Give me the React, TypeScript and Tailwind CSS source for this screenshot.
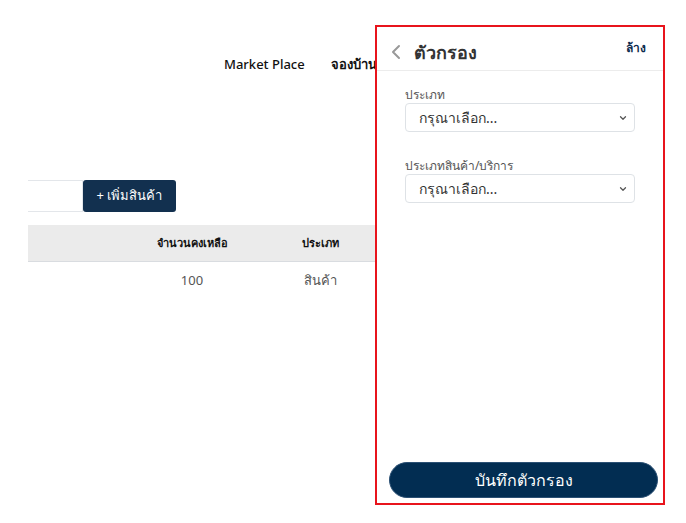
import React from "react";

function Chevron({ className }: { className?: string }) {
  return (
    <svg className={className} viewBox="0 0 16 16" fill="none" stroke="currentColor" strokeWidth="2" strokeLinecap="round" strokeLinejoin="round">
      <path d="M4 6l4 4 4-4" />
    </svg>
  );
}

function SelectBox() {
  return (
    <div className="flex h-[29px] w-full items-center justify-between rounded-[4px] border border-[#dee2e6] pl-[13px] pr-[6px] text-[14px] text-[#333]">
      <span>กรุณาเลือก...</span>
      <Chevron className="h-[10px] w-[10px] text-[#555]" />
    </div>
  );
}

export default function App() {
  return (
    <div className="relative h-[523px] w-[686px] overflow-hidden bg-white" style={{ fontFamily: '"Noto Sans", "Open Sans", sans-serif' }}>
      {/* page */}
      <div className="pl-[28px]">
        <div className="flex h-[20px] items-center mt-[55px] pl-[196px] text-[13px] text-[#111]">
          <span className="font-medium">Market Place</span>
          <span className="ml-[26px] font-bold">จองบ้าน</span>
        </div>
        <div className="mt-[105px] flex">
          <div className="h-[32px] w-[55px] border border-l-0 border-[#e3e6ea]" />
          <div className="flex h-[32px] w-[93px] items-center justify-center rounded-[3px] bg-[#12304f] text-[13px] text-white">
            + เพิ่มสินค้า
          </div>
        </div>
        <div className="mt-[13px] w-[360px]">
          <div className="grid h-[37px] grid-cols-[97px_134px_122px] items-center border-b border-[#d9dce0] bg-[#ebebeb] text-[11px] font-bold text-[#111]">
            <span />
            <span className="text-center">จำนวนคงเหลือ</span>
            <span className="text-center">ประเภท</span>
          </div>
          <div className="grid h-[38px] grid-cols-[97px_134px_122px] items-center text-[13px] text-[#555]">
            <span />
            <span className="text-center">100</span>
            <span className="text-center">สินค้า</span>
          </div>
        </div>
      </div>

      {/* filter panel overlay */}
      <div className="absolute left-[375px] top-[25px] flex h-[480px] w-[290px] flex-col border-2 border-[#e8141c] bg-white">
        <div className="flex h-[44px] items-start justify-between border-b border-[#ececec] pl-[14px] pr-[17px]">
          <div className="mt-[16px] flex items-center">
            <svg className="h-[16px] w-[10px] text-[#999]" viewBox="0 0 10 16" fill="none" stroke="currentColor" strokeWidth="2" strokeLinecap="round" strokeLinejoin="round">
              <path d="M8 2L2 8l6 6" />
            </svg>
            <span className="ml-[13px] text-[18px] font-semibold leading-none text-[#333]">ตัวกรอง</span>
          </div>
          <span className="mt-[15px] text-[12px] font-bold leading-none text-[#0d2a4d]">ล้าง</span>
        </div>
        <div className="flex flex-1 flex-col px-[28px] pt-[16px]">
          <div className="text-[12px] leading-[16px] text-[#555]">ประเภท</div>
          <SelectBox />
          <div className="mt-[26px] text-[12px] leading-[16px] text-[#555]">ประเภทสินค้า/บริการ</div>
          <SelectBox />
        </div>
        <div className="mb-[5px] ml-[12px] mr-[5px] flex h-[36px] items-center justify-center rounded-full border border-[#2b5074] bg-[#022d52] text-[16px] font-medium text-white">
          บันทึกตัวกรอง
        </div>
      </div>
    </div>
  );
}
